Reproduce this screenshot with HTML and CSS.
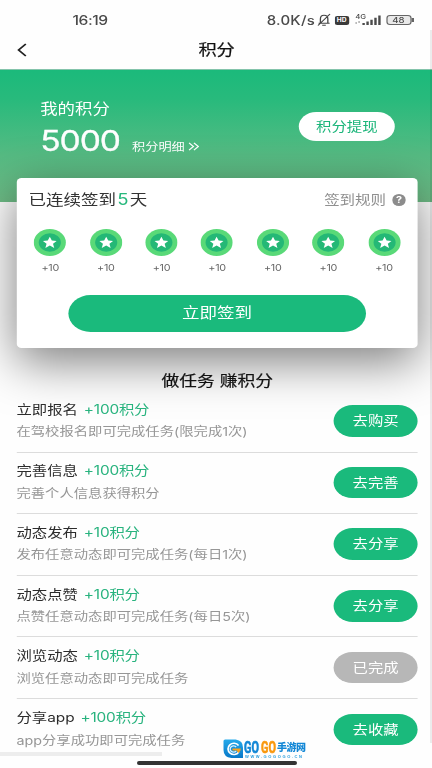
FILE: index.html
```html
<!DOCTYPE html>
<html lang="zh-CN">
<head>
<meta charset="utf-8">
<title>积分</title>
<link rel="stylesheet" href="styles.css">
</head>
<body>
<svg class="defs" width="0" height="0">
  <symbol id="medal" viewBox="0 0 27 27">
    <circle cx="13.5" cy="13.5" r="13.4" fill="#59d978"/>
    <circle cx="13.5" cy="13.5" r="9.2" fill="#24b876"/>
    <path d="M13.5 7.700l1.700 3.900 4 .3-3 2.800 1 4.200-3.700-2.300-3.700 2.300 1-4.200-3-2.800 4-.3z" fill="#fff"/>
  </symbol>
</svg>
<div class="app">
  <div class="status">
    <span class="clock">16:19</span>
    <div class="tray">
      <span class="speed">8.0K/s</span>
      <svg class="bell" width="12" height="14" viewBox="0 0 12 14" fill="none" stroke="#444" stroke-width="1.1"><path d="M1.500 10.300h9.200M3 10V6c0-2.200 1.200-3.700 3-3.700S9.200 3.800 9.200 6v4M4.500 12.300h3M11 1L1 12.500"/></svg>
      <span class="hd">HD</span>
      <svg class="signal" width="22" height="14" viewBox="0 0 22 14" fill="#4a4a4a"><text x="0" y="6" font-size="6.500">4G</text><path d="M0 9h1.500v2H0zM2.500 8h1.500v2H2.500z" fill="#bbb"/><path d="M6 10h2v2H6zM9.300 8.500h2V12h-2zM12.600 6.800h2V12h-2zM15.900 4.800h2V12h-2zM19.200 2.500h2V12h-2z"/></svg>
      <span class="battery">48</span>
    </div>
  </div>
  <div class="nav">
    <svg class="back" width="9" height="14" viewBox="0 0 9 14" fill="none" stroke="#222" stroke-width="1.600"><path d="M7.500 1L1.500 7l6 6"/></svg>
    <h1>积分</h1>
  </div>
  <div class="hero">
    <div>
      <div class="hero-label">我的积分</div>
      <div class="balance"><span class="points">5000</span><span class="detail">积分明细</span><svg width="9" height="9" viewBox="0 0 9 9" fill="none" stroke="#fff" stroke-width="1.100"><path d="M.5.8l3.700 3.700L.5 8.200M4.600.8l3.700 3.700-3.700 3.700"/></svg></div>
    </div>
    <div class="withdraw">积分提现</div>
  </div>
  <div class="card">
    <div class="card-head">
      <span class="streak">已连续签到<b>5</b>天</span>
      <span class="rules">签到规则<i>?</i></span>
    </div>
    <div class="days">
      <div><svg><use href="#medal"/></svg><span>+10</span></div>
      <div><svg><use href="#medal"/></svg><span>+10</span></div>
      <div><svg><use href="#medal"/></svg><span>+10</span></div>
      <div><svg><use href="#medal"/></svg><span>+10</span></div>
      <div><svg><use href="#medal"/></svg><span>+10</span></div>
      <div><svg><use href="#medal"/></svg><span>+10</span></div>
      <div><svg><use href="#medal"/></svg><span>+10</span></div>
    </div>
    <div class="checkin">立即签到</div>
  </div>
  <h2>做任务 赚积分</h2>
  <div class="tasks">
    <div class="task"><div><p class="name">立即报名<em>+100积分</em></p><p class="desc">在驾校报名即可完成任务(限完成1次)</p></div><span class="btn">去购买</span></div>
    <div class="task"><div><p class="name">完善信息<em>+100积分</em></p><p class="desc">完善个人信息获得积分</p></div><span class="btn">去完善</span></div>
    <div class="task"><div><p class="name">动态发布<em>+10积分</em></p><p class="desc">发布任意动态即可完成任务(每日1次)</p></div><span class="btn">去分享</span></div>
    <div class="task"><div><p class="name">动态点赞<em>+10积分</em></p><p class="desc">点赞任意动态即可完成任务(每日5次)</p></div><span class="btn">去分享</span></div>
    <div class="task"><div><p class="name">浏览动态<em>+10积分</em></p><p class="desc">浏览任意动态即可完成任务</p></div><span class="btn done">已完成</span></div>
    <div class="task"><div><p class="name">分享app<em>+100积分</em></p><p class="desc">app分享成功即可完成任务</p></div><span class="btn">去收藏</span></div>
  </div>
</div>
<div class="edge"></div>
<div class="scroll"></div>
<div class="mark">
  <svg width="20" height="19" viewBox="0 0 19 19" preserveAspectRatio="none">
    <defs><linearGradient id="blue" x1="0" y1="0" x2="0" y2="1"><stop offset="0" stop-color="#25a9ea"/><stop offset="1" stop-color="#0878c8"/></linearGradient></defs>
    <path d="M2 .5h10q7 1 7 8V19H8q-7.500-1-7.500-8V2q0-1.500 1.500-1.500z" fill="url(#blue)"/>
    <path d="M14.800 6.500A5.600 5.600 0 1 0 15 13" fill="none" stroke="#fff" stroke-width="1.600"/>
    <path d="M12.500 8A3.200 3.200 0 1 0 12.500 12" fill="none" stroke="#d5f0ff" stroke-width="1.300"/>
    <path d="M9 9.500h8q0 3-2.500 4.500l-1.500-2.500H9z" fill="#f9a11b"/>
  </svg>
  <div class="words">
    <svg class="brand" width="62" height="15" viewBox="0 0 62 15">
      <text class="go" transform="translate(0 13.500) scale(.64 1)">GO</text>
      <text class="go gold" transform="translate(17 13.500) scale(.64 1)">GO</text>
      <text class="site" transform="translate(33 12)">手游网</text>
    </svg>
    <div class="url">WWW.GOGOGO.CN</div>
  </div>
</div>
<div class="home"></div>
</body>
</html>
```
FILE: styles.css
```css
* { box-sizing: border-box; margin: 0; padding: 0; }
html, body { width: 432px; height: 768px; overflow: hidden; background: #fefefe; }
body { position: relative; font-family: Inter, "Noto Sans CJK SC", sans-serif; }
.defs { position: absolute; }

/* The interface is designed 360px wide and widened to fill the window. */
.app { width: 360px; height: 768px; overflow: hidden; transform: scaleX(1.2); transform-origin: 0 0; color: #333; }

.status { height: 30px; padding: 10px 17.500px 0 60.500px; display: flex; justify-content: space-between; color: #4a4a4a; font-weight: 500; }
.clock { font-size: 13px; line-height: 20px; letter-spacing: -0.400px; }
.tray { display: flex; align-items: center; height: 20px; }
.speed { font-size: 12.500px; letter-spacing: 0.200px; margin-right: 1px; }
.bell { margin-right: 3.500px; }
.hd { width: 11.500px; height: 9px; border-radius: 2px; background: #3a3a3a; color: #fff; font-size: 5.500px; line-height: 9px; font-weight: 700; text-align: center; margin-right: 5px; }
.signal { margin-right: 4px; }
.battery { position: relative; width: 21px; height: 10px; border: 1px solid #666; border-radius: 3px; background: #e9e9e9; font-size: 8px; line-height: 8px; text-align: center; }
.battery::after { content: ""; position: absolute; right: -3px; top: 2px; width: 1.500px; height: 4px; background: #666; }

.nav { height: 39px; display: grid; grid-template-columns: 14px 1fr 14px; align-items: center; padding: 0 12.500px 0 13.500px; }
.nav h1 { font-size: 15.200px; font-weight: 400; line-height: 20px; text-align: center; color: #111; -webkit-text-stroke: 0.200px #111; }

.hero { height: 133px; padding: 27px 31px 0 33.500px; display: flex; justify-content: space-between; align-items: flex-start; color: #fff; background: linear-gradient(#1bba7b 0%, #28ba7c 22%, #56bb83 65%, #6fbd87 100%); border-top: 1px solid #84c4ab; }
.hero-label { font-size: 14.500px; line-height: 24px; }
.balance { display: flex; align-items: baseline; margin-top: 2px; }
.points { font-size: 28px; line-height: 36px; font-weight: 400; letter-spacing: -0.900px; width: 76.500px; -webkit-text-stroke: 0.300px #fff; }
.detail { font-size: 11px; margin-right: 3px; }
.withdraw { width: 80px; height: 29px; margin-top: 15px; border-radius: 15px; background: #fff; color: #1bb57a; font-size: 12.800px; line-height: 29px; text-align: center; }

.card { position: relative; width: 334.500px; height: 170px; margin: -24px 0 0 13.700px; padding: 10px 5px 0; border-radius: 4px; background: #fff; box-shadow: 0 14px 44px rgba(0, 0, 0, .5); }
.card-head { display: flex; justify-content: space-between; padding: 0 5px; line-height: 24px; }
.streak { font-size: 14.600px; }
.streak b { font-weight: 400; font-size: 15.500px; color: #26b87c; margin: 0 1px; }
.rules { display: flex; align-items: center; font-size: 12.900px; color: #8f8f8f; }
.rules i { width: 11.500px; height: 11.500px; border-radius: 50%; margin-left: 5px; background: #8c8c8c; color: #fff; font: 700 9px/11.500px Inter, sans-serif; text-align: center; }
.days { display: grid; grid-template-columns: repeat(7, 1fr); margin-top: 17px; }
.days div { display: flex; flex-direction: column; align-items: center; }
.days svg { width: 27px; height: 27px; }
.days span { font-size: 9px; line-height: 12px; margin-top: 6px; color: #666; letter-spacing: -0.200px; }
.checkin { width: 247.500px; height: 37px; margin: 21px 0 0 38.500px; border-radius: 19px; background: #1aba7c; color: #fff; font-size: 14.600px; line-height: 37px; text-align: center; }

h2 { position: relative; margin-top: 23px; height: 20px; font-size: 14.800px; line-height: 20px; font-weight: 400; text-align: center; color: #111; -webkit-text-stroke: 0.200px #111; padding-left: 2px; }
.tasks { position: relative; margin: 0 12px 0 13.700px; }
.task { height: 61.600px; padding: 9px 0 9.600px; display: flex; align-items: center; justify-content: space-between; border-bottom: 1px solid #dcdcdc; }
.task:last-child { border-bottom: 0; }
.name { font-size: 12.800px; line-height: 20px; color: #2c2c2c; }
.name em { font-style: normal; color: #28b37e; margin-left: 5px; letter-spacing: -0.150px; }
.desc { font-size: 11.950px; line-height: 20px; margin-top: 2.500px; color: #969696; }
.btn { width: 70px; height: 31.500px; border-radius: 16px; background: #1aba7c; color: #fff; font-size: 12.800px; line-height: 31.500px; text-align: center; }
.done { background: #b7b7b7; }

.edge { position: absolute; left: 430px; top: 30px; width: 2px; height: 713px; background: rgba(0, 0, 0, .07); }
.scroll { position: absolute; left: 0; top: 752px; width: 162px; height: 4px; background: #ededed; }
.home { position: absolute; left: 137px; top: 761px; width: 160px; height: 3.500px; border-radius: 2px; background: #333; }

/* Site mark floating over the list */
.mark { position: absolute; left: 223px; top: 739px; display: flex; gap: 1px; }
.words { width: 62px; white-space: nowrap; }
.brand { display: block; overflow: visible; }
.go { font: 700 17px Roboto, sans-serif; fill: #1287d6; stroke: #1287d6; stroke-width: .7px; }
.gold { fill: #f9990f; stroke: #f9990f; }
.site { font: 900 10px "Noto Sans CJK SC", sans-serif; letter-spacing: -0.500px; fill: #1287d6; }
.url { margin-left: 1px; font: 700 4px/5px "Liberation Sans", sans-serif; letter-spacing: 1.600px; color: #259bdc; }
```
